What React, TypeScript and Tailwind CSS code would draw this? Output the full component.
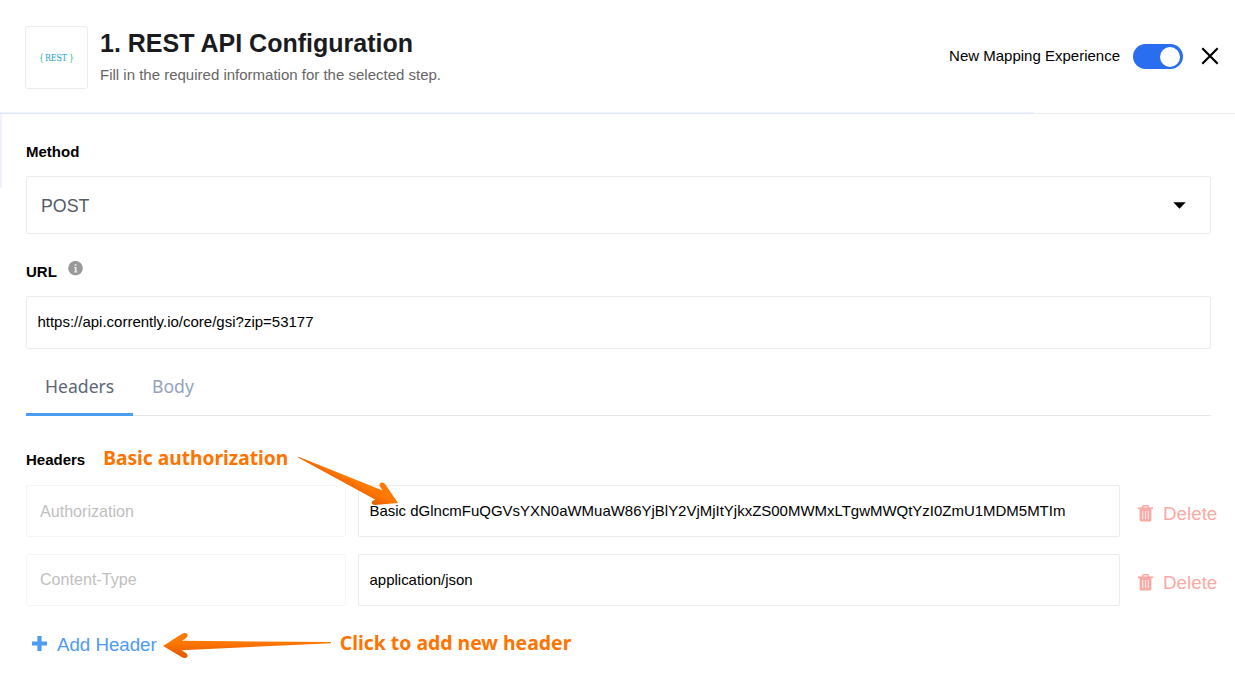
import type { ReactNode } from 'react';

const rows = [
  { name: 'Authorization', value: 'Basic dGlncmFuQGVsYXN0aWMuaW86YjBlY2VjMjItYjkxZS00MWMxLTgwMWQtYzI0ZmU1MDM5MTIm', nudge: 'pb-0' },
  { name: 'Content-Type', value: 'application/json', nudge: 'pb-px' },
];

function TrashIcon() {
  return (
    <svg className="h-[17px] w-[15px] shrink-0" viewBox="0 0 15 17" fill="none" stroke="currentColor">
      <path d="M4.6 3V1.8Q4.6.8 5.6.8h3.8q1 0 1 1V3" strokeWidth="1.5" />
      <path d="M0 2.4h15v1.7H0z" fill="currentColor" stroke="none" />
      <path d="M1.6 4h11.8v11q0 1.6-1.6 1.6H3.2q-1.6 0-1.6-1.6z" fill="currentColor" stroke="none" />
      <path d="M4.7 6v8.2M7.5 6v8.2M10.3 6v8.2" stroke="white" strokeWidth="1.1" strokeOpacity=".75" />
    </svg>
  );
}

function Label({ children }: { children: ReactNode }) {
  return <div className="text-[15px] font-bold leading-5 text-black">{children}</div>;
}

export default function App() {
  return (
    <main className="relative h-[694px] w-[1235px] overflow-hidden bg-white font-['Liberation_Sans',Arial,sans-serif]">
      <header className="flex h-[114px] items-start border-b border-[#ececec] pl-[25px] pr-4">
        <div className="mt-[26px] flex h-[63px] w-[63px] items-center justify-center rounded-[3px] border border-[#ececec]">
          <div className="flex scale-y-125 font-['DejaVu_Serif',serif] text-[7.8px] text-[#22a5cf]">
            <span className="text-[#22bf7d]">{'{'}</span>
            <span className="ml-px mr-[2px]">REST</span>
            <span className="text-[#22bf7d]">{'}'}</span>
          </div>
        </div>
        <div className="ml-3 mt-7 grow">
          <h1 className="whitespace-nowrap text-[25px] font-bold leading-[30px] text-[#1b1b1f]">1. REST API Configuration</h1>
          <p className="mt-[7px] text-[15px] leading-5 text-[#666]">Fill in the required information for the selected step.</p>
        </div>
        <div className="mt-11 flex h-[25px] items-center">
          <span className="text-[15px] text-black">New Mapping Experience</span>
          <span className="ml-[13px] flex h-[25px] w-[50px] items-center justify-end rounded-full bg-[#296df0] pr-[3px]">
            <span className="h-5 w-5 rounded-full bg-white" />
          </span>
          <svg className="-mt-px ml-[18px] h-[18px] w-[18px]" viewBox="0 0 18 18" stroke="black" strokeWidth="2.2">
            <path d="M1.3 1.3l15.4 15.4M16.7 1.3L1.3 16.7" />
          </svg>
        </div>
      </header>
      <div className="absolute left-0 top-[112px] h-[2px] w-[1034px] border-b border-[#dfe6f6] bg-[#edf3fd]" />
      <div className="absolute left-0 top-[114px] h-[74px] w-[2px] bg-[#edf2fd]" />

      <div className="pl-[26px] pr-6 pt-7">
        <Label>Method</Label>
        <div className="mt-[14px] flex h-[58px] items-center justify-between rounded-[2px] border border-[#ececec] pl-[14px] pr-6">
          <span className="mt-[3px] text-[17.8px] text-[#555b66]">POST</span>
          <svg className="h-[7px] w-[13px]" viewBox="0 0 13 7"><path d="M.3.3h12.4L6.5 6.7z" /></svg>
        </div>

        <div className="mt-[28px] flex">
          <Label>URL</Label>
          <svg className="-mt-px ml-[11.5px] h-[15px] w-[15px]" viewBox="0 0 15 15">
            <circle cx="7.5" cy="7.2" r="7.3" fill="#999" />
            <path d="M6.6 3.2h2v1.6h-2zM6 6h2.6v4.6h.8v1H6v-1h.8V7H6z" fill="#e8e8e8" />
          </svg>
        </div>
        <div className="mt-[14px] flex h-[53px] items-center rounded-[2px] border border-[#ececec] pl-[10.4px] text-[15px] text-black">
          <span>https://api.corrently.io/core/gsi?zip=53177</span>
        </div>

        <div className="flex h-[67px] border-b border-[#e4e7ed] font-['Noto_Sans',sans-serif] text-[17.6px] leading-6">
          <div className="h-[67px] w-[107px] border-b-[3px] border-[#4a9df0] pl-[19px] pt-[25px] text-[#5d6675]">Headers</div>
          <div className="pl-[19px] pt-[25px] text-[#94a2b8]">Body</div>
        </div>

        <div className="mt-[34px] flex">
          <Label>Headers</Label>
          <span className="-mt-[3px] ml-[18px] font-['Noto_Sans',sans-serif] text-[19.2px] font-bold leading-[22px] text-[#ff7300]">Basic authorization</span>
        </div>
        <div className="mt-[15px] flex flex-col gap-[17px]">
          {rows.map((row) => (
            <div key={row.name} className="flex h-[52px] items-center">
              <div className={`flex h-full w-[320px] shrink-0 items-center rounded-[2px] border border-[#f5f5f5] pl-[13px] text-[16.1px] text-[#c0c0c0] ${row.nudge}`}>
                {row.name}
              </div>
              <div className="ml-3 flex h-full w-[762px] shrink-0 items-center rounded-[2px] border border-[#ececec] pl-[10.5px] text-[14.98px] text-black">
                {row.value}
              </div>
              <div className="ml-[18px] mt-1 flex shrink-0 items-center text-[#faaaa5]">
                <TrashIcon />
                <span className="ml-[10px] mt-[2px] text-[18.8px]">Delete</span>
              </div>
            </div>
          ))}
        </div>
        <div className="mt-[26px] flex h-6 items-center text-[#4d9bf3]">
          <svg className="-mt-px ml-[6px] h-[15px] w-[15px]" viewBox="0 0 15 15"><path d="M5.4 0h4.2v5.4H15v4.2H9.6V15H5.4V9.6H0V5.4h5.4z" fill="currentColor" /></svg>
          <span className="ml-[10px] mt-[2px] text-[18.7px]">Add Header</span>
          <span className="-mt-[2px] ml-[183px] font-['Noto_Sans',sans-serif] text-[19.4px] font-bold text-[#ff7300]">Click to add new header</span>
        </div>
      </div>

      <svg className="pointer-events-none absolute left-0 top-0 h-[694px] w-[1235px]" viewBox="0 0 1235 694">
        <defs>
          <linearGradient id="a" gradientUnits="userSpaceOnUse" x1="376" y1="486" x2="368" y2="501">
            <stop offset=".35" stopColor="#ff7800" /><stop offset="1" stopColor="#e85d00" />
          </linearGradient>
          <linearGradient id="b" gradientUnits="userSpaceOnUse" x1="0" y1="634" x2="0" y2="658">
            <stop offset=".35" stopColor="#ff7800" /><stop offset=".85" stopColor="#e85d00" />
          </linearGradient>
        </defs>
        <path d="M298 457.4L298.6 456.8 382.6 490.4 379.6 486Q379 483.2 381.6 482.4 383.8 482.2 385.4 484.4L398 503 375 505Q372.2 505 371.6 502.8 371.7 500.5 374.3 500L375.5 499.7Z" fill="url(#a)" />
        <path d="M331 642.1L182 640.8 186.3 638Q188.3 636 187.2 633.8 185.5 632.2 182.5 633.5L163 646 182.5 657.4Q185.8 659 187.2 657 188.2 655 186.3 653.2L181.5 650.3 331 643.2Z" fill="url(#b)" />
      </svg>
    </main>
  );
}
